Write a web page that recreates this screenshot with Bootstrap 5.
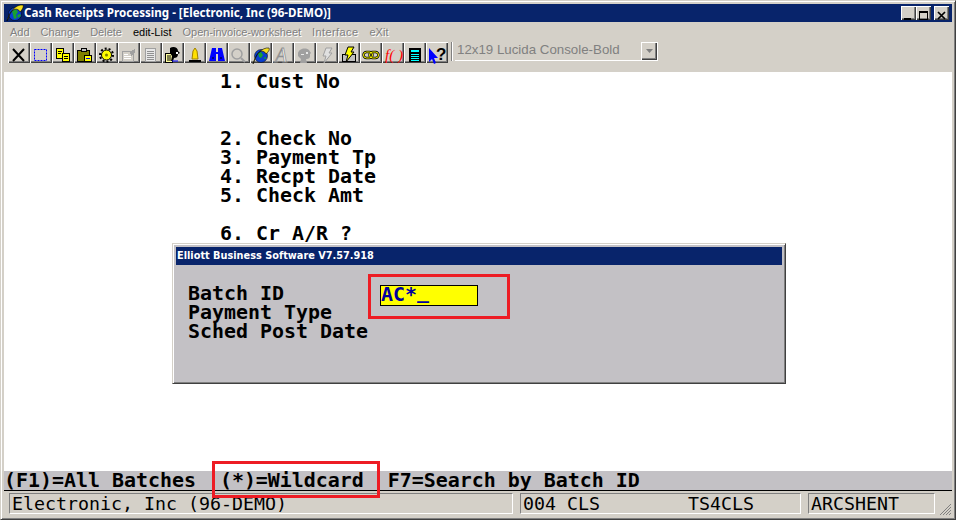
<!doctype html>
<html lang="en">
<head>
<meta charset="utf-8">
<title>Cash Receipts Processing</title>
<link href="https://cdn.jsdelivr.net/npm/bootstrap@5.3.0/dist/css/bootstrap.min.css" rel="stylesheet">
<style>
html,body{margin:0;height:520px;overflow:hidden;background:#d4d0c8}
.win{position:relative;width:956px;height:520px;background:#d4d0c8;border:1px solid;border-color:#d4d0c8 #404040 #404040 #d4d0c8;box-shadow:inset 1px 1px 0 #fff,inset -1px -1px 0 #808080;padding:3px}
.ttl{height:18px;background:#08246b;color:#fff;font:700 11.6px/18px "Noto Sans",sans-serif;padding-left:2px}
.ttl-txt{white-space:pre}
.cap-btn{width:15px;height:14px;background:#d4d0c8;box-shadow:inset 1px 1px 0 #fff,inset -1px -1px 0 #404040,inset -2px -2px 0 #808080}
.cap-wrap{padding-right:3px}
.cap-gap{margin-left:3px}
.mnu{height:20px;font:11px/20px "Liberation Sans",sans-serif}
.mnu-item{padding:0 5.5px;color:#808080;text-shadow:1px 1px 0 #fff}
.mnu-first{margin-left:.5px}
.mnu-wide{letter-spacing:.4px}
.mnu-on{color:#000;text-shadow:none}
.tbar{height:30px;padding:0 0 0 4px}
.tbtn{width:22px;height:21px;flex:none;background:#d4d0c8;box-shadow:inset 1px 1px 0 #fff,inset -1px -1px 0 #404040,inset -2px -2px 0 #808080}
.tsep{width:2px;height:19px;margin:0 2px 0 3px;background:#808080;border-right:1px solid #fff}
.combo{width:203px;height:19px;border-bottom:1px solid #fff;border-right:1px solid #fff;padding-left:2px;color:#808080;font:13.3px/15px "Liberation Sans",sans-serif}
.combo-btn{width:16px;height:18px;box-shadow:inset 1px 1px 0 #fff,inset -1px -1px 0 #404040,inset -2px -2px 0 #808080}
.term{position:relative;flex:1 1 auto;background:#fff}
.mono{font-family:"DejaVu Sans Mono",monospace;font-weight:700;font-size:19.93px;line-height:19px;white-space:pre;color:#000;margin:0}
.scr{padding-left:216px}
.dlg{position:absolute;left:168px;top:171px;width:614px;height:141px;background:#c3c1c5;border:1px solid;border-color:#d4d0c8 #404040 #404040 #d4d0c8;box-shadow:inset 1px 1px 0 #fff,inset -1px -1px 0 #808080;padding:3px 3px 0}
.dlg-ttl{height:18px;background:#08246b;color:#fff;font:700 9.75px/18px "DejaVu Sans",sans-serif;padding-left:1px}
.dlg-body{position:relative;padding:19px 0 0 12px}
.fld{position:absolute;left:204px;top:20px;width:98px;height:21px;background:#ff0;border:1px solid #000;color:#0000a0;line-height:18px}
.crt{display:inline-block;transform:translateY(-3px)}
.redbox{position:absolute;border:3px solid #ed1c24}
.rb-a{left:367px;top:273px;width:142px;height:45px}
.rb-b{left:211px;top:460px;width:168px;height:37px}
.hint{height:19px;background:#c3c1c5}
.rule{height:1px;background:#000}
.stat{height:25px;padding:2px 0 0 5px;gap:7px}
.pnl{height:21px;border:1px solid;border-color:#808080 #fff #fff #808080;padding-left:2px;font:400 18.27px/19px "DejaVu Sans Mono",monospace;white-space:pre;color:#000}
.p1{width:504px}.p2{width:281px}.p3{width:127px}
.grip{position:absolute;right:3px;bottom:3px}
.ic-a{font:italic 400 20px "Liberation Serif",serif;fill:#fff;stroke:#909090;stroke-width:.8px}
.ic-f{font:italic 400 15px "Liberation Serif",serif;fill:#f00}
.ic-q{font:700 17px "Liberation Sans",sans-serif;fill:#000}
</style>
</head>
<body>
<div class="win d-flex flex-column">
  <div class="ttl d-flex align-items-center">
    <svg width="18" height="18" viewBox="0 0 18 18"><circle cx="9" cy="10" r="6.500" fill="#0a3fd0" stroke="#000" stroke-width=".5"/><path d="M6 7l4-2 2 3-2 3 1 3-3 1-1-4zM11 11l3-1 1 2-3 2z" fill="#18a030"/><path d="M1 17C3 8 10 0 17 1c1 2-1 5-3 7-1-3-5-4-8-1-3 3-3 7-5 10z" fill="#f5e020" stroke="#000" stroke-width=".6"/></svg>
    <span class="ttl-txt">Cash Receipts Processing - [Electronic, Inc (96-DEMO)]</span>
    <div class="ms-auto d-flex cap-wrap">
      <div class="cap-btn"><svg width="15" height="14" viewBox="0 0 15 14"><rect x="3" y="9" width="7" height="2"/></svg></div>
      <div class="cap-btn"><svg width="15" height="14" viewBox="0 0 15 14"><path d="M3 2h9v9H3z M4 4v6h7V4z" fill-rule="evenodd"/></svg></div>
      <div class="cap-btn cap-gap"><svg width="15" height="14" viewBox="0 0 15 14"><path d="M4 3l7 7M11 3l-7 7" stroke="#000" stroke-width="1.700"/></svg></div>
    </div>
  </div>
  <div class="mnu d-flex">
    <span class="mnu-item mnu-first">Add</span><span class="mnu-item">Change</span><span class="mnu-item">Delete</span><span class="mnu-item mnu-on">edit-List</span><span class="mnu-item">Open-invoice-worksheet</span><span class="mnu-item mnu-wide">Interface</span><span class="mnu-item">eXit</span>
  </div>
  <div class="tbar d-flex">
    <div class="tbtn"><svg width="22" height="21" viewBox="0 0 22 21"><path d="M5 4l11 12M16 4L5 16" stroke="#000" stroke-width="2"/></svg></div>
    <div class="tbtn"><svg width="22" height="21" viewBox="0 0 22 21"><rect x="4.500" y="4.500" width="12" height="11" fill="none" stroke="#00f" stroke-dasharray="2 1"/></svg></div>
    <div class="tbtn"><svg width="22" height="21" viewBox="0 0 22 21" shape-rendering="crispEdges"><path d="M4.500 3.500h7v10h-7z" fill="#ff0" stroke="#000"/><path d="M10.500 8.500h7v8h-7z" fill="#ff0" stroke="#000"/><path d="M6 6h4M6 8h3M12 11h4M12 13h4" stroke="#000"/></svg></div>
    <div class="tbtn"><svg width="22" height="21" viewBox="0 0 22 21" shape-rendering="crispEdges"><path d="M3.500 5.500h12v11h-12z" fill="#808000" stroke="#000"/><path d="M7 3.500h5v3H7z" fill="#c0c0c0" stroke="#000"/><path d="M10.500 10.500h7v6h-7z" fill="#ff0" stroke="#000"/><path d="M12 13h4" stroke="#00f"/></svg></div>
    <div class="tbtn"><svg width="22" height="21" viewBox="0 0 22 21"><circle cx="10.500" cy="10" r="5" fill="#ff0" stroke="#000"/><circle cx="10.500" cy="10" r="6.500" fill="none" stroke="#000" stroke-dasharray="2 2" stroke-width="2"/><circle cx="10.500" cy="10" r="1.500" fill="#808000"/></svg></div>
    <div class="tbtn"><svg width="22" height="21" viewBox="0 0 22 21" shape-rendering="crispEdges"><path d="M4.500 6.500h11v10h-11z" fill="#d4d0c8" stroke="#a0a0a0"/><path d="M6 9h4M6 11h7M6 13h7" stroke="#fff"/><path d="M12 7l5-3v4l-4 3z" fill="#a0a0a0"/></svg></div>
    <div class="tbtn"><svg width="22" height="21" viewBox="0 0 22 21" shape-rendering="crispEdges"><path d="M5.500 3.500h10v13h-10z" fill="#e8e8e8" stroke="#a0a0a0"/><path d="M7 6h7M7 8h7M7 10h7M7 12h7M7 14h7" stroke="#909090"/></svg></div>
    <div class="tbtn"><svg width="22" height="21" viewBox="0 0 22 21"><path d="M3.500 8.500h7v9h-7z" fill="#ffffa0" stroke="#000" shape-rendering="crispEdges"/><path d="M5 11h4M5 13h4M5 15h4" stroke="#000"/><path d="M8 3c3-2 8-1 8 3l2 2-2 1c0 3-2 4-4 4l-1 3h-2l1-5-2-3z" fill="#000"/><path d="M14 7h2v2h-2z" fill="#fff"/><path d="M10 16h6" stroke="#00f"/></svg></div>
    <div class="tbtn"><svg width="22" height="21" viewBox="0 0 22 21"><path d="M11 3l2 3 1 8H8l1-8z" fill="#ffe000" stroke="#a08000"/><path d="M5 15h12v2H5z"/></svg></div>
    <div class="tbtn"><svg width="22" height="21" viewBox="0 0 22 21"><path d="M6 3h4v4h2V3h4l3 13h-7V9h-2v7H3z" fill="#00f"/><path d="M6 13h2M14 13h2" stroke="#000"/></svg></div>
    <div class="tbtn"><svg width="22" height="21" viewBox="0 0 22 21"><circle cx="9" cy="9" r="5" fill="none" stroke="#a0a0a0" stroke-width="1.500"/><path d="M13 13l4 4" stroke="#a0a0a0" stroke-width="2"/></svg></div>
    <div class="tbtn"><svg width="22" height="21" viewBox="0 0 22 21"><circle cx="11" cy="11" r="6.500" fill="#0a3fd0" stroke="#000" stroke-width=".5"/><path d="M8 8l3-1 2 3-2 3-2-1zM13 13l3-1v2z" fill="#18a030"/><path d="M3 19C5 10 12 2 19 3c1 2-1 4-3 6-1-3-5-4-8-1-2 3-3 7-5 11z" fill="#f5e020" stroke="#000" stroke-width=".6"/></svg></div>
    <div class="tbtn"><svg width="22" height="21" viewBox="0 0 22 21"><text x="3" y="17" class="ic-a">A</text></svg></div>
    <div class="tbtn"><svg width="22" height="21" viewBox="0 0 22 21"><path d="M4 8c1-4 7-6 11-3l2 3-1 1v3c-1 2-3 2-4 2l1 4H6l1-4-3-3z" fill="#a0a0a0"/><path d="M12 7h2v2h-2zM7 9h3v1H7z" fill="#e8e8e8"/></svg></div>
    <div class="tbtn"><svg width="22" height="21" viewBox="0 0 22 21"><path d="M10 3h6l-3 5h3L8 18l2-7H7z" fill="#e0e0e0" stroke="#a0a0a0"/></svg></div>
    <div class="tbtn"><svg width="22" height="21" viewBox="0 0 22 21"><path d="M4.500 9.500h13v7h-13z" fill="#c0c0c0" stroke="#000" shape-rendering="crispEdges"/><path d="M10 2h6l-3 5h3L8 17l2-7H7z" fill="#ff0" stroke="#000"/></svg></div>
    <div class="tbtn"><svg width="22" height="21" viewBox="0 0 22 21"><rect x="3.500" y="7" width="9" height="6" rx="3" fill="none" stroke="#000" stroke-width="2.400"/><rect x="9.500" y="7" width="9" height="6" rx="3" fill="none" stroke="#000" stroke-width="2.400"/><rect x="3.500" y="7" width="9" height="6" rx="3" fill="none" stroke="#ff0"/><rect x="9.500" y="7" width="9" height="6" rx="3" fill="none" stroke="#ff0"/></svg></div>
    <div class="tbtn"><svg width="22" height="21" viewBox="0 0 22 21"><text x="3" y="15" class="ic-f">f( )</text></svg></div>
    <div class="tbtn"><svg width="22" height="21" viewBox="0 0 22 21" shape-rendering="crispEdges"><rect x="5" y="3" width="12" height="14" fill="#000"/><path d="M7 5h8v2H7z" fill="#0ff"/><path d="M7 9h8M7 11h8M7 13h8M7 15h8" stroke="#0ff"/></svg></div>
    <div class="tbtn"><svg width="22" height="21" viewBox="0 0 22 21"><path d="M3 3v14l3-3 2 5 2-1-2-5h4z" fill="#00f"/><text x="10" y="15" class="ic-q">?</text></svg></div>
    <div class="tsep"></div>
    <div class="combo d-flex justify-content-between"><span>12x19 Lucida Console-Bold</span><div class="combo-btn"><svg width="16" height="18" viewBox="0 0 16 18"><path d="M5 7h7l-3.500 4z" fill="#808080"/></svg></div></div>
  </div>
  <div class="term">
<pre class="mono scr">1. Cust No


2. Check No
3. Payment Tp
4. Recpt Date
5. Check Amt

6. Cr A/R ?</pre>
    <div class="dlg">
      <div class="dlg-ttl">Elliott Business Software V7.57.918</div>
      <div class="dlg-body">
<pre class="mono">Batch ID
Payment Type
Sched Post Date</pre>
        <div class="fld mono">AC*<span class="crt">_</span></div>
      </div>
    </div>
  </div>
  <div class="hint mono">(F1)=All Batches  (*)=Wildcard  F7=Search by Batch ID</div>
  <div class="rule"></div>
  <div class="stat d-flex">
    <div class="pnl p1">Electronic, Inc (96-DEMO)</div>
    <div class="pnl p2">004 CLS        TS4CLS</div>
    <div class="pnl p3">ARCSHENT</div>
  </div>
  <svg class="grip" width="13" height="13" viewBox="0 0 13 13"><path d="M12 1L1 12M12 4L4 12M12 7L7 12M12 10l-2 2" stroke="#808080" fill="none"/></svg>
  <div class="redbox rb-a"></div>
  <div class="redbox rb-b"></div>
</div>
<script src="https://cdn.jsdelivr.net/npm/bootstrap@5.3.0/dist/js/bootstrap.bundle.min.js"></script>
</body>
</html>
